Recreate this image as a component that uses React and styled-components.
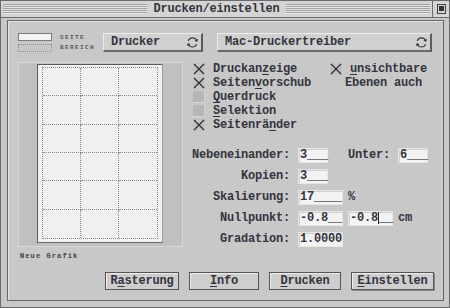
import React from 'react';
import styled, { createGlobalStyle } from 'styled-components';

const Global = createGlobalStyle`
  html, body { margin: 0; padding: 0; background: #c8c8c8; }
  body {
    width: 450px; height: 308px; overflow: hidden;
    font-family: "Liberation Mono", "DejaVu Sans Mono", monospace;
  }
`;

const Window = styled.div`
  width: 450px; height: 308px; box-sizing: border-box;
  border: 1px solid #6b6b6b;
  background: #c8c8c8;
  display: flex; flex-direction: column;
  color: #34343e;
  font-size: 12px; font-weight: bold; letter-spacing: -0.2px;
`;

const TitleBar = styled.div`
  height: 17px; box-sizing: border-box; display: flex; align-items: stretch;
  border-bottom: 1px solid #6b6b6b;
  background: #d4d4d4;
`;

const Stripes = styled.div`
  flex: 1; margin: 3px 2px 3px 2px;
  background: repeating-linear-gradient(to bottom, #a2a2a2 0 1px, #e4e4e4 1px 2px);
`;

const Title = styled.div`
  padding: 0 4px; line-height: 16px;
`;

const CloseBox = styled.div`
  width: 16px; border-left: 1px solid #6b6b6b;
  display: flex; align-items: center; justify-content: center;
`;

const Frame = styled.div`
  flex: 1; margin: 2px 5px 6px 6px;
  border: 1px solid #666;
  box-shadow: inset 1px 1px 0 #e2e2e2;
  display: flex; flex-direction: column;
  padding: 12px 9px 10px 10px;
`;

const TopRow = styled.div`
  display: flex; align-items: center; height: 19px;
`;

const AreaPicker = styled.div`
  width: 77px; display: flex; align-items: center; gap: 8px;
`;

const Swatches = styled.div`
  width: 35px; display: flex; flex-direction: column; gap: 3px;
`;

const Swatch = styled.div`
  height: 8px; box-sizing: border-box;
  border: 1px ${p => (p.$dotted ? 'dotted #8e8e8e' : 'solid #7a7a7a')};
  background: ${p => (p.$dotted ? 'transparent' : '#f4f4f4')};
`;

const TinyLabels = styled.div`
  display: flex; flex-direction: column; gap: 3px;
  font-size: 6px; letter-spacing: 1.4px; line-height: 7px; color: #555560;
`;

const Popup = styled.div`
  width: ${p => p.$w}px; height: 19px; box-sizing: border-box;
  margin-left: ${p => p.$ml}px;
  display: flex; align-items: center; justify-content: space-between;
  padding: 0 2px 0 7px;
  background: #d0d0d0;
  border-top: 1px solid #ececec; border-left: 1px solid #ececec;
  border-right: 2px solid #5c5c5c; border-bottom: 2px solid #6a6a6a;
`;

const MainRow = styled.div`
  display: flex; margin-top: 10px;
`;

const LeftCol = styled.div`
  width: 165px; display: flex; flex-direction: column;
`;

const PreviewPanel = styled.div`
  height: 185px; box-sizing: border-box;
  background: #c0c0c0;
  border: 1px solid #d8d8d8;
  padding: 1px 0 0 18px;
`;

const Page = styled.div`
  width: 126px; height: 179px; box-sizing: border-box;
  background: #f1f1f1;
  border: 1px solid #5a5a5a;
  border-right-color: #9a9a9a; border-bottom-color: #6a6a6a;
  padding: 2px 0 0 4px;
`;

const PageGrid = styled.div`
  width: 116px; height: 172px; box-sizing: border-box;
  border: 1px dotted #8a8a8a;
  display: grid;
  grid-template-columns: repeat(3, 1fr);
  grid-template-rows: repeat(6, 1fr);
`;

const PageCell = styled.div`
  border-right: ${p => (p.$lastCol ? 'none' : '1px dotted #8a8a8a')};
  border-bottom: ${p => (p.$lastRow ? 'none' : '1px dotted #8a8a8a')};
`;

const SmallNote = styled.div`
  margin: 5px 0 0 2px;
  font-size: 7px; letter-spacing: 1.1px; line-height: 8px; color: #404048;
`;

const RightCol = styled.div`
  margin-left: 10px; flex: 1; display: flex; flex-direction: column;
`;

const CheckGrid = styled.div`
  display: grid;
  grid-template-columns: 137px auto;
  grid-auto-rows: 14px;
`;

const CheckRow = styled.div`
  display: flex; align-items: center; gap: 8px;
`;

const Indented = styled.div`
  padding-left: 15px; display: flex; align-items: center;
`;

const BoxWrap = styled.div`
  width: 12px; height: 12px; flex: none;
  background: ${p => (p.$checked ? '#c2c2c2' : '#b6b6b6')};
  box-shadow: ${p => (p.$checked ? 'none' : 'inset -1px -1px 0 #d6d6d6')};
  display: flex;
`;

const Fields = styled.div`
  margin-top: 15px;
  display: grid;
  grid-template-columns: 97px auto;
  column-gap: 8px; row-gap: 5px;
  grid-auto-rows: 16px;
  align-items: center;
`;

const FieldLabel = styled.div`
  justify-self: end; white-space: pre;
`;

const FieldLine = styled.div`
  display: flex; align-items: center; gap: ${p => p.$gap || 5}px;
`;

const Input = styled.div`
  width: ${p => p.$w}px; height: 15px; box-sizing: border-box;
  background: #f3f3f3;
  border: 1px solid #e6e6e6;
  box-shadow: inset 1px 1px 0 #d0d0d0;
  padding-left: 1px; line-height: 13px;
  display: flex; align-items: center; white-space: pre;
  margin-left: ${p => p.$ml || 0}px;
`;

const Caret = styled.span`
  display: inline-block; width: 0; height: 12px;
  border-left: 1px solid #222;
`;

const ButtonRow = styled.div`
  margin-top: auto; display: flex; justify-content: flex-end; gap: 10px;
`;

const Button = styled.div`
  width: ${p => p.$w}px; height: 18px; box-sizing: border-box;
  border: 1px solid #555;
  background: #cecece;
  box-shadow: inset 1px 1px 0 #ececec${p => (p.$default ? ', 1px 1px 0 #8a8a8a' : '')};
  display: flex; align-items: center; justify-content: center;
  line-height: 16px;
`;

const Key = styled.span`
  text-decoration: underline; text-decoration-thickness: 1px; text-underline-offset: 2px;
`;

const CycleIcon = () => (
  <svg width="13" height="13" viewBox="0 0 13 13" fill="none" stroke="#3a3a3a" strokeWidth="1.2">
    <path d="M2.2 4.9 A4.5 4.5 0 0 1 10.6 4.6" />
    <path d="M10.6 8.1 A4.5 4.5 0 0 1 2.2 8.1" />
    <path d="M9 4.2 L10.8 5.2 L11.4 3.2" />
    <path d="M4 8.6 L2.2 7.8 L1.6 9.8" />
  </svg>
);

const WindowIcon = () => (
  <svg width="11" height="12" viewBox="0 0 11 12" fill="none">
    <rect x="1.5" y="1.5" width="8" height="9" stroke="#444" strokeWidth="1" />
    <rect x="3" y="3" width="5" height="5" fill="#333" />
  </svg>
);

const XMark = () => (
  <svg width="12" height="12" viewBox="0 0 12 12" stroke="#33333c" strokeWidth="1.4">
    <path d="M1 1 L11 11 M11 1 L1 11" />
  </svg>
);

const Check = ({ checked }) => (
  <BoxWrap $checked={checked}>{checked && <XMark />}</BoxWrap>
);

const withKey = (text, i) => (
  <>
    {text.slice(0, i)}
    <Key>{text[i]}</Key>
    {text.slice(i + 1)}
  </>
);

export default function App() {
  const cells = [];
  for (let r = 0; r < 6; r++) {
    for (let c = 0; c < 3; c++) {
      cells.push(<PageCell key={`${r}-${c}`} $lastCol={c === 2} $lastRow={r === 5} />);
    }
  }
  return (
    <>
      <Global />
      <Window>
        <TitleBar>
          <Stripes />
          <Title>Drucken/einstellen</Title>
          <Stripes />
          <CloseBox><WindowIcon /></CloseBox>
        </TitleBar>
        <Frame>
          <TopRow>
            <AreaPicker>
              <Swatches>
                <Swatch />
                <Swatch $dotted />
              </Swatches>
              <TinyLabels>
                <span>SEITE</span>
                <span>BEREICH</span>
              </TinyLabels>
            </AreaPicker>
            <Popup $w={100} $ml={8}>
              <span>Drucker</span>
              <CycleIcon />
            </Popup>
            <Popup $w={215} $ml={14}>
              <span>Mac-Druckertreiber</span>
              <CycleIcon />
            </Popup>
          </TopRow>
          <MainRow>
            <LeftCol>
              <PreviewPanel>
                <Page>
                  <PageGrid>{cells}</PageGrid>
                </Page>
              </PreviewPanel>
              <SmallNote>Neue Grafik</SmallNote>
            </LeftCol>
            <RightCol>
              <CheckGrid>
                <CheckRow><Check checked /><span>{withKey('Druckanzeige', 7)}</span></CheckRow>
                <CheckRow><Check checked /><span>{withKey('unsichtbare', 0)}</span></CheckRow>
                <CheckRow><Check checked /><span>{withKey('Seitenvorschub', 6)}</span></CheckRow>
                <Indented>Ebenen auch</Indented>
                <CheckRow><Check /><span>{withKey('Querdruck', 0)}</span></CheckRow>
                <div />
                <CheckRow><Check /><span>{withKey('Selektion', 0)}</span></CheckRow>
                <div />
                <CheckRow><Check checked /><span>{withKey('Seitenränder', 8)}</span></CheckRow>
              </CheckGrid>
              <Fields>
                <FieldLabel>Nebeneinander:</FieldLabel>
                <FieldLine $gap={20}>
                  <Input $w={30}>3___</Input>
                  <span>Unter:</span>
                  <Input $w={30} $ml={-12}>6___</Input>
                </FieldLine>
                <FieldLabel>Kopien:</FieldLabel>
                <FieldLine>
                  <Input $w={30}>3___</Input>
                </FieldLine>
                <FieldLabel>Skalierung:</FieldLabel>
                <FieldLine>
                  <Input $w={45}>17____</Input>
                  <span>%</span>
                </FieldLine>
                <FieldLabel>Nullpunkt:</FieldLabel>
                <FieldLine>
                  <Input $w={45}>-0.8__</Input>
                  <Input $w={45}>-0.8<Caret />__</Input>
                  <span>cm</span>
                </FieldLine>
                <FieldLabel>Gradation:</FieldLabel>
                <FieldLine>
                  <Input $w={45}>1.0000</Input>
                </FieldLine>
              </Fields>
            </RightCol>
          </MainRow>
          <ButtonRow>
            <Button $w={74}>{withKey('Rasterung', 1)}</Button>
            <Button $w={70}>{withKey('Info', 0)}</Button>
            <Button $w={72}>{withKey('Drucken', 0)}</Button>
            <Button $w={83} $default>{withKey('Einstellen', 0)}</Button>
          </ButtonRow>
        </Frame>
      </Window>
    </>
  );
}
